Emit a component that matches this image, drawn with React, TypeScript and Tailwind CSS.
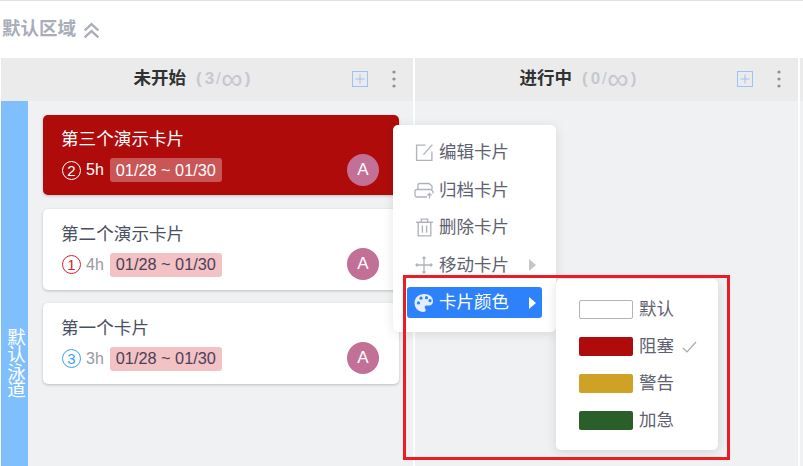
import React from "react";

const font = { fontFamily: '"Liberation Sans", "Noto Sans CJK SC", sans-serif' };

function Dots() {
  return (
    <svg width="4" height="18" viewBox="0 0 4 18" className="block">
      <circle cx="2" cy="2" r="1.6" fill="#8f8f96" />
      <circle cx="2" cy="9" r="1.6" fill="#8f8f96" />
      <circle cx="2" cy="16" r="1.6" fill="#8f8f96" />
    </svg>
  );
}

function PlusBox() {
  return (
    <svg width="16" height="16" viewBox="0 0 16 16" className="block">
      <rect x="0.5" y="0.5" width="15" height="15" fill="none" stroke="#9cc3f7" />
      <path d="M8 3.5v9M3.5 8h9" stroke="#9cc3f7" fill="none" />
    </svg>
  );
}

function ColumnHead({ title, count, extra }: { title: string; count: string; extra: string }) {
  return (
    <div className="h-[43px] bg-[#ebebec] flex items-center pb-[2px]">
      <div className={`flex-1 flex justify-center items-center ${extra}`}>
        <span className="text-[17.5px] font-bold text-[#303133]">{title}</span>
        <span className="ml-[10px] flex items-center text-[17px] font-bold text-[#c5c8d0]">
          <span>(</span>
          <span className="ml-[3px]">{count}</span>
          <span className="ml-[2px] font-normal">/</span>
          <span className="ml-[1px] font-normal text-[30px] leading-[20px] h-[20px] w-[20px] flex items-center justify-center">∞</span>
          <span className="ml-[3px]">)</span>
        </span>
      </div>
      <div className="flex items-center gap-[24px] pr-[17px]">
        <PlusBox />
        <Dots />
      </div>
    </div>
  );
}

function Card({
  title,
  num,
  numColor,
  hours,
  blocked,
  height,
}: {
  title: string;
  num: string;
  numColor: string;
  hours: string;
  blocked?: boolean;
  height: string;
}) {
  return (
    <div
      className={`${height} rounded-[5px] pl-[18px] pr-[20px] flex items-center justify-between shadow-[0_1px_3px_rgba(0,0,0,0.22)] ${
        blocked ? "bg-[#b00b0b] text-white" : "bg-white text-[#4a4f63]"
      }`}
    >
      <div className="flex flex-col pb-[1px]">
        <div className="text-[17.6px] leading-[24px]">{title}</div>
        <div className="flex items-center mt-[7px] h-[24px]">
          <span
            className="w-[19px] h-[19px] ml-px rounded-full border flex items-center justify-center text-[15px] leading-none"
            style={{ borderColor: numColor, color: numColor }}
          >
            {num}
          </span>
          <span className={`ml-[5px] text-[16px] ${blocked ? "text-white" : "text-[#9a9a9a]"}`}>{hours}</span>
          <span
            className={`ml-[6px] h-[24px] px-[6px] rounded-[3px] flex items-center text-[16.3px] ${
              blocked ? "bg-[#c85656] text-white" : "bg-[#f2c2c4] text-[#4a4058]"
            }`}
          >
            01/28 ~ 01/30
          </span>
        </div>
      </div>
      <div className="w-[32px] h-[32px] rounded-full bg-[#c27096] text-white flex items-center justify-center text-[17px] mt-[29px]">
        A
      </div>
    </div>
  );
}

function MenuRow({
  icon,
  label,
  active,
  arrow,
}: {
  icon: React.ReactNode;
  label: string;
  active?: boolean;
  arrow?: boolean;
}) {
  return (
    <div
      className={`h-[31px] mb-[6.5px] w-[135px] rounded-[3px] flex items-center pl-[7px] text-[17.5px] ${
        active ? "bg-[#2d82fb] text-white" : "text-[#5e6270]"
      }`}
    >
      <span className="w-[20px] h-[20px] flex items-center justify-center">{icon}</span>
      <span className="ml-[5px]">{label}</span>
      {arrow && (
        <svg width="7" height="12" viewBox="0 0 7 12" className="ml-[20px]">
          <path d="M0 0l7 6-7 6z" fill={active ? "#ffffff" : "#c4c6cc"} />
        </svg>
      )}
    </div>
  );
}

function ColorRow({ color, label, check, outline }: { color: string; label: string; check?: boolean; outline?: boolean }) {
  return (
    <div className="h-[37px] flex items-center">
      <span
        className={`w-[54px] h-[19px] rounded-[2px] ${outline ? "border border-[#b4b4b8]" : ""}`}
        style={{ backgroundColor: color }}
      />
      <span className="ml-[6px] text-[17.5px] text-[#5e6270]">{label}</span>
      {check && (
        <svg width="15" height="12" viewBox="0 0 15 12" className="ml-[8px]">
          <path d="M1 7l4 4 9-10" fill="none" stroke="#a8a9b0" strokeWidth="1.2" />
        </svg>
      )}
    </div>
  );
}

export default function App() {
  const ic = { fill: "none", stroke: "#b0b3bc", strokeWidth: 1.3 };
  return (
    <div className="relative w-[803px] h-[466px] overflow-hidden bg-white" style={font}>
      <div className="h-px bg-[#e0e0e0]" />
      <div className="h-[57px] flex items-center pb-[2px] pl-[2px]">
        <span className="text-[18.5px] font-bold text-[#a8adb8]">默认区域</span>
        <svg width="17" height="17" viewBox="0 0 16 16" className="ml-[6.5px] mt-[3px]">
          <path d="M1.5 8l6.5-6 6.5 6M1.5 14.5l6.5-6 6.5 6" fill="none" stroke="#a8adb8" strokeWidth="2.2" />
        </svg>
      </div>
      <div className="flex pl-px h-[408px]">
        <div className="w-[412px] flex flex-col">
          <ColumnHead title="未开始" count="3" extra="pl-[31px]" />
          <div className="flex-1 flex bg-[#f0f1f3]">
            <div className="w-[27px] bg-[#7fbffe] flex items-center justify-center pt-[160px] pl-[4px]">
              <span className="w-[19px] text-[18.5px] leading-[17.5px] text-white text-center">默认泳道</span>
            </div>
            <div className="flex-1 pl-[15px] pr-[14px] pt-[14px] flex flex-col">
              <Card title="第三个演示卡片" num="2" numColor="#ffffff" hours="5h" blocked height="h-[80px] mb-[14px]" />
              <Card title="第二个演示卡片" num="1" numColor="#e0202a" hours="4h" height="h-[81px] mb-[13px]" />
              <Card title="第一个卡片" num="3" numColor="#3a9ff0" hours="3h" height="h-[81px]" />
            </div>
          </div>
        </div>
        <div className="w-[2px]" />
        <div className="w-[383px] flex flex-col">
          <ColumnHead title="进行中" count="0" extra="pl-[4px]" />
          <div className="flex-1 bg-[#f0f1f3]" />
        </div>
        <div className="w-[2px]" />
        <div className="flex-1 flex flex-col">
          <div className="h-[43px] bg-[#ebebec]" />
          <div className="flex-1 bg-[#f0f1f3]" />
        </div>
      </div>

      {/* context menu */}
      <div className="absolute left-[393px] top-[125px] w-[163px] h-[207px] bg-white rounded-[5px] shadow-[0_2px_12px_rgba(0,0,0,0.1)] pl-[14px] pt-[12px]">
        <MenuRow
          label="编辑卡片"
          icon={
            <svg width="19" height="19" viewBox="0 0 18 18">
              <path d="M16 8v8.500H1.500V2H10" {...ic} />
              <path d="M16.500 1.500L8 11" {...ic} />
            </svg>
          }
        />
        <MenuRow
          label="归档卡片"
          icon={
            <svg width="20" height="19" viewBox="0 0 20 18">
              <path d="M4 8V3.500Q4 2 5.500 2H15l3 2.500V8M13 15.500H3Q1 15.500 1 13.500V10Q1 8 3 8h14l2 2v2" {...ic} />
              <path d="M15.500 17v-5M13.500 14l2-2 2 2" {...ic} />
            </svg>
          }
        />
        <MenuRow
          label="删除卡片"
          icon={
            <svg width="19" height="21" viewBox="0 0 18 20">
              <path d="M1 5h16M6 5V2h6v3M3 5v13h12V5M7 8v7M11 8v7" {...ic} />
            </svg>
          }
        />
        <MenuRow
          label="移动卡片"
          arrow
          icon={
            <svg width="18" height="18" viewBox="0 0 18 18">
              <path d="M9 1v16M1 9h16M7.500 2.500L9 1l1.500 1.500M7.500 15.500L9 17l1.500-1.500M2.500 7.500L1 9l1.500 1.500M15.500 7.500L17 9l-1.500 1.500" {...ic} />
            </svg>
          }
        />
        <MenuRow
          label="卡片颜色"
          active
          arrow
          icon={
            <svg width="20" height="20" viewBox="0 0 20 20">
              <path
                fillRule="evenodd"
                fill="#e3edfd"
                d="M10 1C4.800 1 .5 4.800.5 10c0 5 4 9 9 9 1.500 0 2.200-1 2.200-2 0-1.300-1-1.600-1-2.800 0-1 .8-1.700 1.800-1.700h2.500c2.500 0 4-1.700 4-4C19.500 4 15.200 1 10 1zM4.500 11.500a1.600 1.600 0 1 1 0-3.200 1.600 1.600 0 0 1 0 3.200zM7 6.800a1.600 1.600 0 1 1 0-3.200 1.600 1.600 0 0 1 0 3.200zM12.500 6.300a1.600 1.600 0 1 1 0-3.200 1.600 1.600 0 0 1 0 3.200zM16 9.300a1.600 1.600 0 1 1 0-3.200 1.600 1.600 0 0 1 0 3.200z"
              />
            </svg>
          }
        />
      </div>

      {/* colour submenu */}
      <div className="absolute left-[556px] top-[279px] w-[162px] h-[171px] bg-white rounded-[5px] shadow-[0_2px_12px_rgba(0,0,0,0.12)] pl-[23px] pt-[12px]">
        <ColorRow color="#ffffff" label="默认" outline />
        <ColorRow color="#b00b0b" label="阻塞" check />
        <ColorRow color="#cfa226" label="警告" />
        <ColorRow color="#2b5f2a" label="加急" />
      </div>

      {/* annotation */}
      <div className="absolute left-[403px] top-[275px] w-[327px] h-[185px] border-[3px] border-[#ed1c24] pointer-events-none" />
    </div>
  );
}
